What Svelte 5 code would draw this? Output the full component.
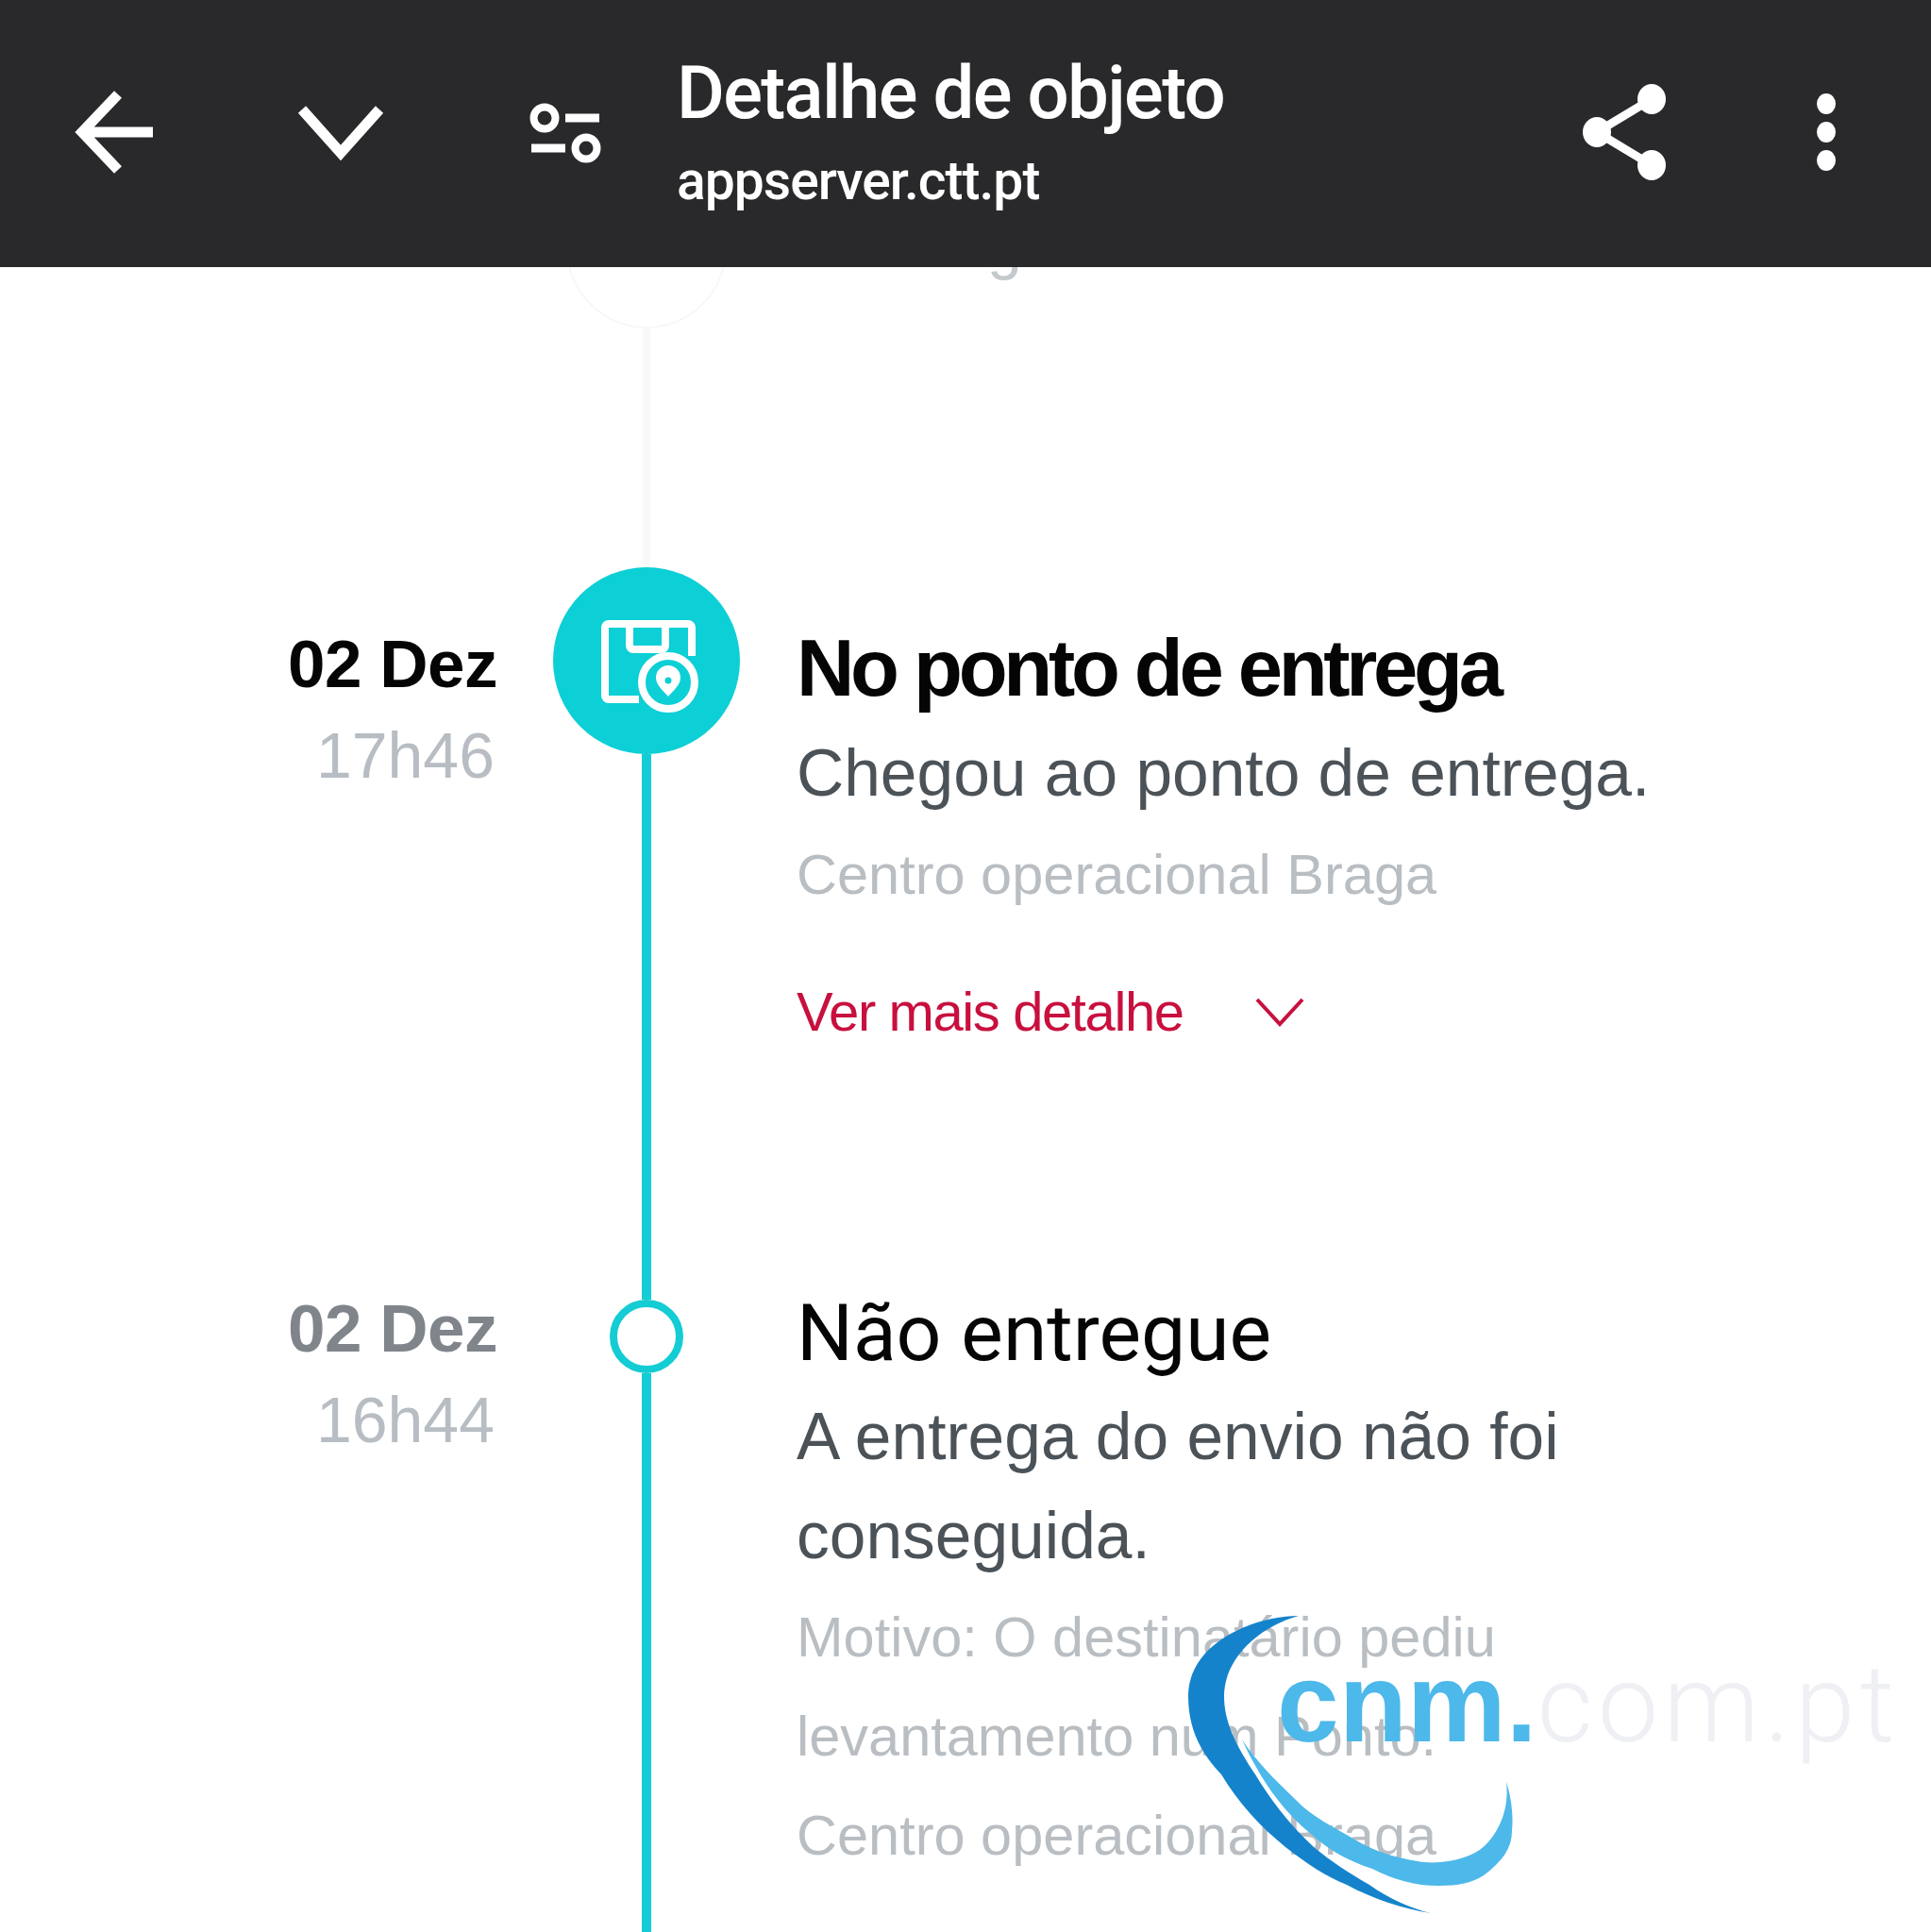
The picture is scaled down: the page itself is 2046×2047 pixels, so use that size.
<script lang="ts">
  const steps = [
    {
      day: '02 Dez',
      time: '17h46',
      title: 'No ponto de entrega',
      text: ['Chegou ao ponto de entrega.'],
      notes: ['Centro operacional Braga'],
      current: true,
    },
    {
      day: '02 Dez',
      time: '16h44',
      title: 'Não entregue',
      text: ['A entrega do envio não foi', 'conseguida.'],
      notes: ['Motivo: O destinatário pediu', 'levantamento num Ponto.', 'Centro operacional Braga'],
      current: false,
    },
  ];
</script>

<div class="page">
  <header class="bar">
    <button class="icon nav" aria-label="Voltar">
      <svg width="90" height="90" viewBox="0 0 90 90"><path d="M85 45H10M48 5 10 45l38 40" fill="none" stroke="#fff" stroke-width="11"/></svg>
    </button>
    <button class="icon nav" aria-label="Expandir">
      <svg width="100" height="70" viewBox="0 0 100 70"><path d="M9 11l41 46 41-46" fill="none" stroke="#fff" stroke-width="11"/></svg>
    </button>
    <button class="icon nav" aria-label="Filtros">
      <svg width="80" height="70" viewBox="0 0 80 70" fill="none" stroke="#fff" stroke-width="8"><circle cx="17" cy="20" r="11.5"/><circle cx="61" cy="52" r="11.5"/><path d="M39 20h36M3 52h36" stroke-width="9"/></svg>
    </button>
    <div class="heading">
      <div class="title">Detalhe de objeto</div>
      <div class="host">appserver.ctt.pt</div>
    </div>
    <button class="icon side" aria-label="Partilhar">
      <svg width="100" height="110" viewBox="0 0 100 110" fill="#fff" stroke="#fff"><path d="M79 20 21 55l58 35" fill="none" stroke-width="9"/><ellipse cx="79" cy="20" rx="15" ry="16" stroke="none"/><ellipse cx="21" cy="55" rx="15" ry="16" stroke="none"/><ellipse cx="79" cy="90" rx="15" ry="16" stroke="none"/></svg>
    </button>
    <button class="icon side" aria-label="Mais">
      <svg width="30" height="90" viewBox="0 0 30 90" fill="#fff"><ellipse cx="15" cy="15" rx="10" ry="11"/><ellipse cx="15" cy="45" rx="10" ry="11"/><ellipse cx="15" cy="75" rx="10" ry="11"/></svg>
    </button>
  </header>

  <div class="ghost">
    <div class="ghost-node"><span class="ghost-dot"></span><span class="ghost-line"></span></div>
    <span class="ghost-text">g</span>
  </div>

  <main class="timeline">
    {#each steps as step}
      <section class="step" class:current={step.current}>
        <div class="when">
          <div class="day">{step.day}</div>
          <div class="time">{step.time}</div>
        </div>
        <div class="track">
          {#if step.current}
            <span class="badge">
              <svg width="198" height="198" viewBox="0 0 198 198" fill="none" stroke="#fff" stroke-width="8">
                <path d="M147 94V64a4 4 0 0 0-4-4H59a4 4 0 0 0-4 4v72a4 4 0 0 0 4 4h32M81 60v23a4 4 0 0 0 4 4h30a4 4 0 0 0 4-4V60" stroke-linejoin="round"/>
                <circle cx="122" cy="122" r="28"/>
                <path d="M122 137c-5-6-13-12-13-20a13 13 0 0 1 26 0c0 8-8 14-13 20z" fill="#fff" stroke="none"/>
                <circle cx="122" cy="120" r="3.5" fill="#0dcfd6" stroke="none"/>
              </svg>
            </span>
          {:else}
            <span class="dot"></span>
          {/if}
          <span class="line"></span>
        </div>
        <div class="info">
          <h2>{step.title}</h2>
          {#each step.text as row}
            <p class="text">{row}</p>
          {/each}
          {#each step.notes as row}
            <p class="note">{row}</p>
          {/each}
          {#if step.current}
            <div class="more">
              <span>Ver mais detalhe</span>
              <svg width="52" height="32" viewBox="0 0 52 32"><path d="M2 3l24 26L50 3" fill="none" stroke="#c8103e" stroke-width="4"/></svg>
            </div>
          {/if}
        </div>
      </section>
    {/each}
  </main>

  <div class="mark" aria-hidden="true">
    <svg width="400" height="340" viewBox="1240 1700 400 340">
      <path d="M1376 1712C1330 1712 1259 1740 1259 1797C1259 1835 1275 1860 1294 1880C1312 1910 1335 1935 1362 1957C1385 1975 1405 1988 1427 1997C1455 2012 1485 2022 1516 2027C1495 2022 1472 2012 1451 1997C1430 1985 1410 1972 1392 1957C1365 1932 1345 1905 1330 1880C1310 1850 1297 1825 1297 1797C1297 1760 1330 1725 1376 1712Z" fill="#1583cb"/>
      <path d="M1316 1843C1335 1885 1360 1920 1389 1943C1410 1962 1430 1972 1454 1980C1478 1992 1500 1998 1524 1998C1545 1998 1560 1995 1572 1987C1592 1972 1602 1958 1602 1940C1604 1920 1600 1900 1596 1888C1598 1905 1595 1920 1589 1933C1580 1952 1568 1963 1551 1968C1535 1973 1518 1975 1502 1972C1478 1968 1458 1962 1437 1950C1412 1935 1390 1925 1373 1907C1350 1885 1330 1865 1316 1843Z" fill="#4db8ea"/>
    </svg>
    <div class="wordmark"><span class="cnm">cnm.</span><span class="com">com.pt</span></div>
  </div>
</div>

<style>
  :global(body) {
    margin: 0;
    background: #fff;
  }

  .page {
    position: relative;
    height: 2047px;
    overflow: hidden;
    background: #fff;
    font-family: 'Liberation Sans', Arial, sans-serif;
  }

  .bar {
    position: relative;
    z-index: 2;
    display: flex;
    align-items: center;
    height: 283px;
    padding-left: 2px;
    padding-right: 4px;
    background: #29292c;
    color: #fff;
  }

  .icon {
    display: flex;
    align-items: center;
    justify-content: center;
    height: 100%;
    padding: 0 0 4px;
    border: 0;
    background: none;
  }

  .nav {
    width: 239px;
    flex: none;
  }

  .side {
    width: 214px;
    flex: none;
  }

  .heading {
    flex: 1;
    padding-top: 5px;
    margin-left: -2px;
    font-family: Roboto, 'Liberation Sans', sans-serif;
  }

  .title {
    font-size: 78px;
    font-weight: 500;
    line-height: 96px;
    letter-spacing: -1.7px;
  }

  .host {
    font-size: 57px;
    font-weight: 500;
    line-height: 90px;
    letter-spacing: -1px;
  }

  .ghost {
    position: relative;
    height: 318px;
  }

  .ghost-node {
    position: absolute;
    left: 600px;
    top: -105px;
    width: 170px;
    height: 423px;
    display: flex;
    flex-direction: column;
    align-items: center;
  }

  .ghost-dot {
    width: 166px;
    height: 166px;
    flex: none;
    border: 2px solid #f6f8f8;
    border-radius: 50%;
  }

  .ghost-line {
    width: 8px;
    flex: 1;
    background: #f8fafa;
  }

  .ghost-text {
    position: absolute;
    left: 1046px;
    top: -56px;
    font-size: 66px;
    line-height: 66px;
    color: #c4c9cc;
  }

  .step {
    display: grid;
    grid-template-columns: 527px 316px 1fr;
  }

  .step.current {
    height: 776px;
  }

  .when {
    padding-top: 55px;
    text-align: right;
  }

  .step:not(.current) .when {
    padding-top: 0;
    margin-top: -17px;
  }

  .day {
    font-size: 71px;
    font-weight: 700;
    line-height: 96px;
    letter-spacing: -0.5px;
    color: #7f858b;
  }

  .current .day {
    color: #050505;
  }

  .time {
    padding-right: 3px;
    font-size: 68px;
    line-height: 96px;
    color: #b7bdc3;
  }

  .track {
    display: flex;
    flex-direction: column;
    align-items: center;
  }

  .badge {
    display: block;
    width: 198px;
    height: 198px;
    flex: none;
    border-radius: 50%;
    background: #0dcfd6;
  }

  .dot {
    width: 62px;
    height: 62px;
    flex: none;
    border: 8px solid #14ccd4;
    border-radius: 50%;
  }

  .line {
    width: 10px;
    flex: 1;
    background: #14ccd4;
  }

  .step:not(.current) .line {
    min-height: 620px;
  }

  .info {
    margin-left: -1px;
    padding-left: 2px;
    padding-top: 57px;
  }

  .step:not(.current) .info {
    padding-top: 0;
    margin-top: -14px;
  }

  h2 {
    margin: 0 0 9px;
    font-size: 85px;
    font-weight: 700;
    line-height: 100px;
    letter-spacing: -4.3px;
    color: #050505;
  }

  .step:not(.current) h2 {
    margin-bottom: 7px;
    font-family: Roboto, 'Liberation Sans', sans-serif;
    font-weight: 400;
    font-size: 84px;
    letter-spacing: 0;
  }

  .text {
    margin: 0;
    font-size: 69.5px;
    line-height: 105px;
    color: #4b5258;
  }

  .note {
    margin: 0;
    position: relative;
    top: 2px;
    font-size: 59.5px;
    line-height: 105px;
    color: #b9bec3;
  }

  .more {
    display: flex;
    align-items: center;
    gap: 76px;
    margin-top: 42px;
    font-size: 58px;
    line-height: 105px;
    letter-spacing: -1.4px;
    color: #c8103e;
  }

  .mark {
    position: absolute;
    left: 1240px;
    top: 1700px;
    width: 806px;
    height: 340px;
  }

  .wordmark {
    position: absolute;
    left: 113px;
    top: 39px;
    line-height: 130px;
    white-space: nowrap;
  }

  .cnm {
    font-size: 118px;
    font-weight: 700;
    color: #4db8ea;
  }

  .com {
    font-family: Roboto, 'Liberation Sans', sans-serif;
    font-size: 115px;
    font-weight: 300;
    letter-spacing: 5px;
    color: #eff0f4;
  }
</style>
